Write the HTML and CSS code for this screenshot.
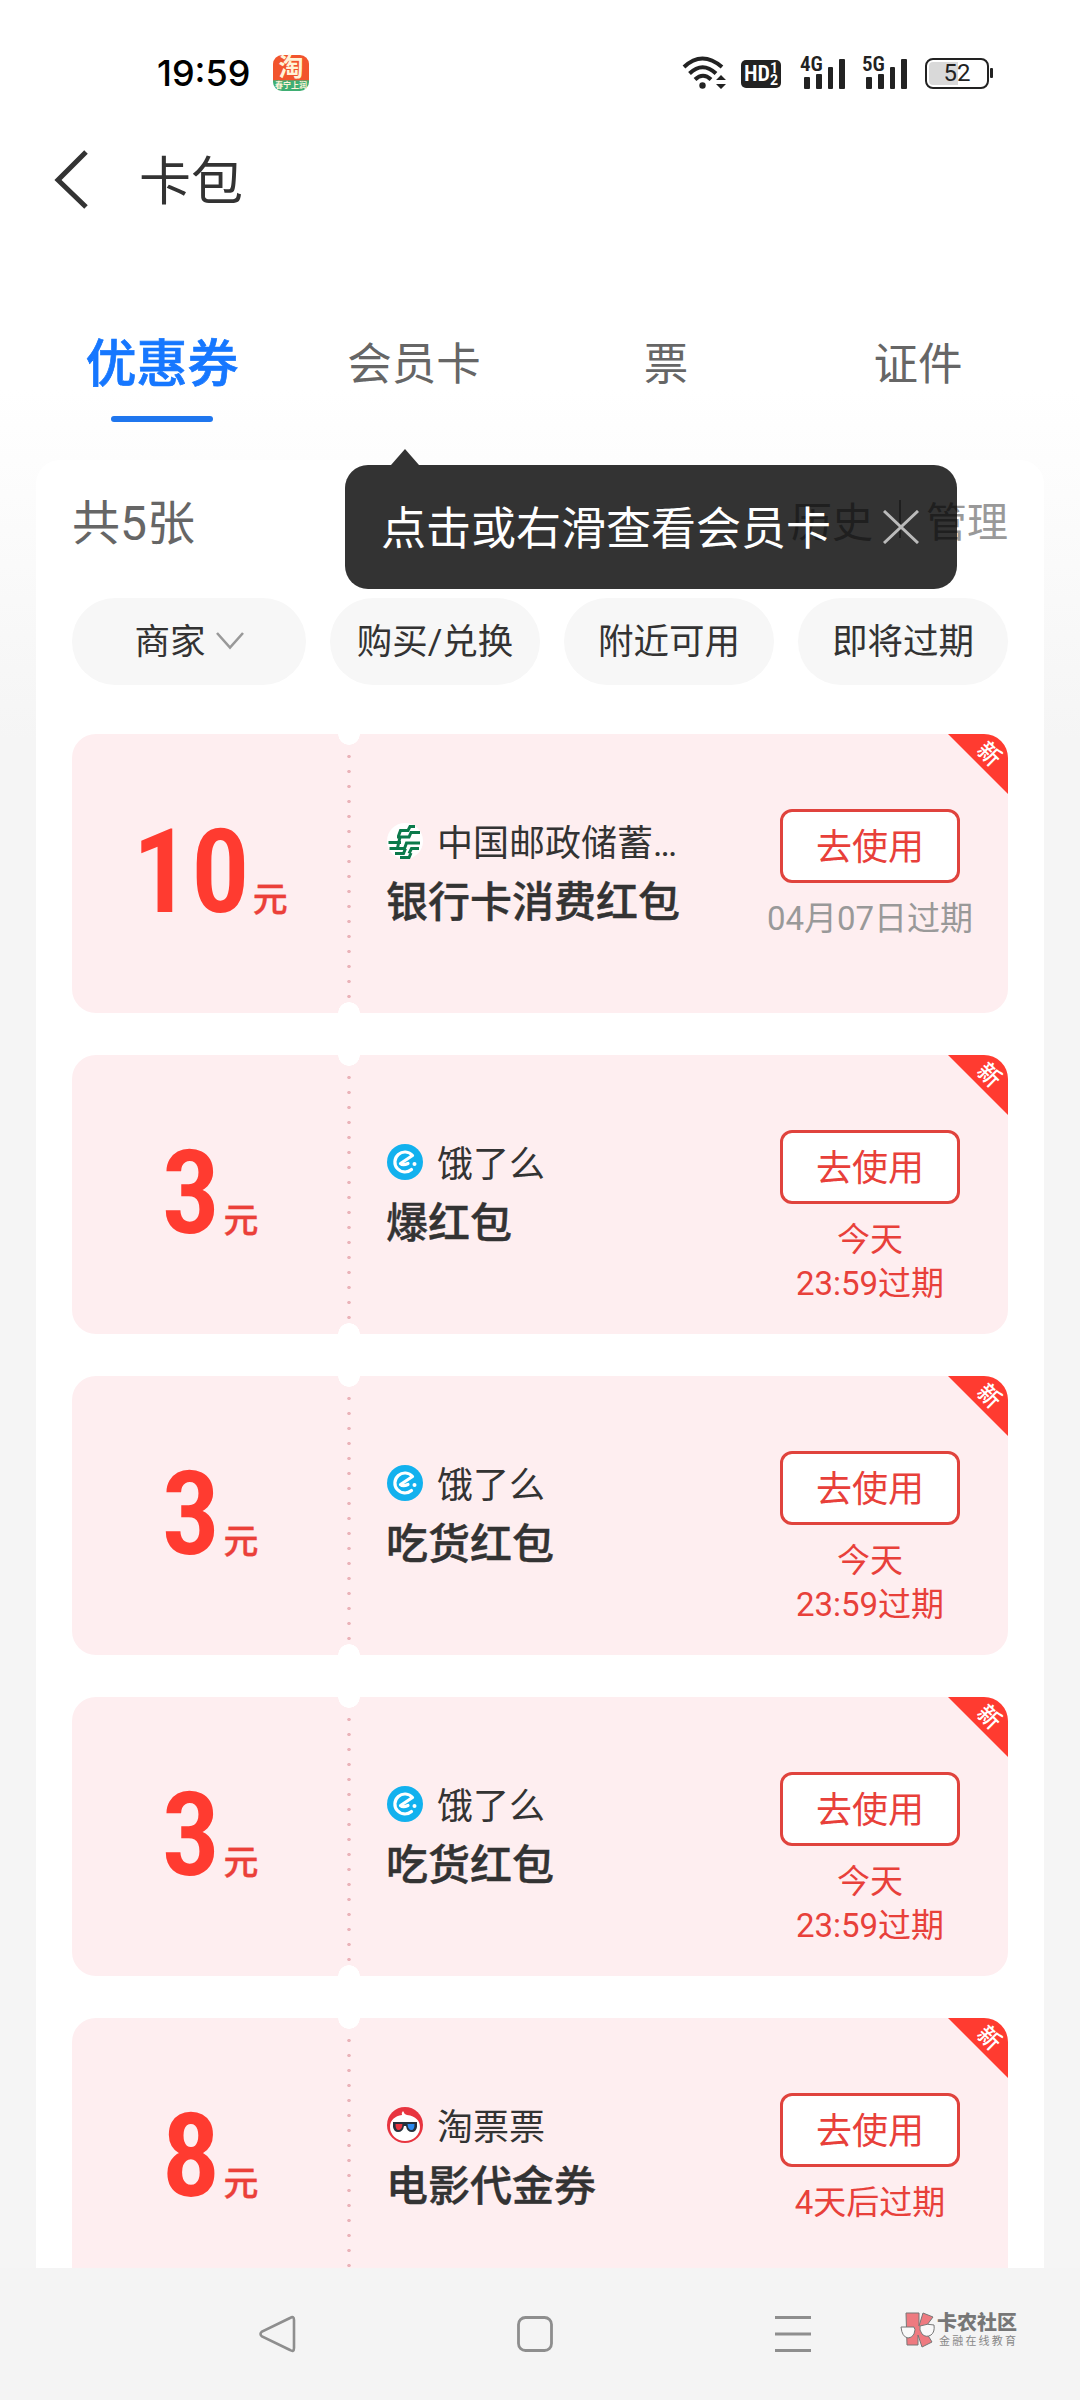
FILE: index.html
```html
<!DOCTYPE html>
<html lang="zh-CN">
<head>
<meta charset="utf-8">
<title>卡包</title>
<link rel="stylesheet" href="styles.css">
</head>
<body>
<svg class="defs" aria-hidden="true">
  <symbol id="psbc" viewBox="0 0 36 36">
    <circle cx="18" cy="18" r="18" fill="#fff"/>
    <g fill="none" stroke="#0b7a4b" stroke-width="3">
      <path d="M11.500 13L13.500 7.500H21L23 3.500H28M10 14H22L24 9.500H33"/>
      <path d="M1.500 19.500H14M2.500 25.500H17.500L19.500 20H33M13 14L10.500 25M22 30.500L24.500 25.500H32M8 30.500H16.500L18.500 25.500M13 34.500H22L24 30"/>
    </g>
  </symbol>
  <symbol id="eleme" viewBox="0 0 36 36">
    <circle cx="18" cy="18" r="18" fill="#12b1ee"/>
    <path d="M24.500 25.500A10 10 0 1 1 25.500 11.500L13.500 19.500Q16 22 21 19.500" fill="none" stroke="#fff" stroke-width="3.200" stroke-linecap="round" stroke-linejoin="round"/>
    <circle cx="27.500" cy="20" r="2" fill="#fff"/>
  </symbol>
  <symbol id="taopiaopiao" viewBox="0 0 36 36">
    <circle cx="18" cy="18" r="18" fill="#e8343f"/>
    <path d="M16 4Q17 7 20 8C29 9 33 14 33 20A15 14 0 0 1 3 20C3 13 8 9 15 8Q14 6 16 4Z" fill="#fff"/>
    <path d="M6 15H30V20Q29 25 25 25Q20 25 19 19H17Q16 25 11 25Q7 25 6 20Z" fill="#26313c"/>
    <path d="M8.500 17H15.500Q15 23 11.500 23Q8.500 23 8.500 17Z" fill="#e8343f"/>
    <path d="M20.500 17H27.500Q27.500 23 24.500 23Q21 23 20.500 17Z" fill="#2b8af0"/>
  </symbol>
</svg>

<div class="screen">
  <header class="status">
    <span class="clock">19:59</span>
    <span class="app-icon"><b>淘</b><i>春宁上润</i></span>
    <div class="indicators">
      <svg class="wifi" width="42" height="34" viewBox="0 0 42 34">
        <g fill="none" stroke="#222" stroke-width="4">
          <path d="M2 11Q20 -6 40 11"/><path d="M7.500 17.500Q20.500 5 34 17.500"/><path d="M13 23.500Q21 16 29 23.500"/>
        </g>
        <circle cx="20.500" cy="29.500" r="3.200" fill="#222"/>
        <path d="M34 24L39 19L44 24ZM34 28L39 33L44 28Z" fill="#222"/>
      </svg>
      <span class="hd"><b>HD</b><span><i>1</i><i>2</i></span></span>
      <span class="signal"><em>4G</em><i class="b1"></i><i class="b2"></i><i class="b3"></i><i class="b4"></i></span>
      <span class="signal"><em>5G</em><i class="b1"></i><i class="b2"></i><i class="b3"></i><i class="b4"></i></span>
      <span class="battery">52</span>
    </div>
  </header>

  <div class="titlebar">
    <svg class="back" width="36" height="60" viewBox="0 0 36 60"><path d="M33 2L5 30L33 57" fill="none" stroke="#333" stroke-width="5"/></svg>
    <h1>卡包</h1>
  </div>

  <nav class="tabs">
    <a class="active">优惠券</a>
    <a>会员卡</a>
    <a>票</a>
    <a>证件</a>
  </nav>

  <main class="panel">
    <div class="summary">
      <span class="count">共5张</span>
      <span class="links"><span>历史</span><i></i><span>管理</span></span>
    </div>
    <div class="filters">
      <span class="chip">商家<svg width="28" height="18" viewBox="0 0 28 18"><path d="M1 1L14 15.500L27 1" fill="none" stroke="#999" stroke-width="2.600"/></svg></span>
      <span class="chip">购买/兑换</span>
      <span class="chip">附近可用</span>
      <span class="chip">即将过期</span>
    </div>

    <section class="list">
      <article class="coupon">
        <div class="amount"><b>10</b><span>元</span></div>
        <div class="info">
          <p class="shop"><svg width="36" height="36"><use href="#psbc"/></svg><span>中国邮政储蓄<span class="dots">...</span></span></p>
          <h2>银行卡消费红包</h2>
        </div>
        <div class="action"><a class="btn">去使用</a><p class="expire later">04月07日过期</p></div>
        <span class="ribbon"><b>新</b></span>
      </article>
      <article class="coupon">
        <div class="amount"><b>3</b><span>元</span></div>
        <div class="info">
          <p class="shop"><svg width="36" height="36"><use href="#eleme"/></svg><span>饿了么</span></p>
          <h2>爆红包</h2>
        </div>
        <div class="action"><a class="btn">去使用</a><p class="expire">今天<br>23:59过期</p></div>
        <span class="ribbon"><b>新</b></span>
      </article>
      <article class="coupon">
        <div class="amount"><b>3</b><span>元</span></div>
        <div class="info">
          <p class="shop"><svg width="36" height="36"><use href="#eleme"/></svg><span>饿了么</span></p>
          <h2>吃货红包</h2>
        </div>
        <div class="action"><a class="btn">去使用</a><p class="expire">今天<br>23:59过期</p></div>
        <span class="ribbon"><b>新</b></span>
      </article>
      <article class="coupon">
        <div class="amount"><b>3</b><span>元</span></div>
        <div class="info">
          <p class="shop"><svg width="36" height="36"><use href="#eleme"/></svg><span>饿了么</span></p>
          <h2>吃货红包</h2>
        </div>
        <div class="action"><a class="btn">去使用</a><p class="expire">今天<br>23:59过期</p></div>
        <span class="ribbon"><b>新</b></span>
      </article>
      <article class="coupon">
        <div class="amount"><b>8</b><span>元</span></div>
        <div class="info">
          <p class="shop"><svg width="36" height="36"><use href="#taopiaopiao"/></svg><span>淘票票</span></p>
          <h2>电影代金券</h2>
        </div>
        <div class="action"><a class="btn">去使用</a><p class="expire">4天后过期</p></div>
        <span class="ribbon"><b>新</b></span>
      </article>
    </section>

    <div class="tooltip">
      <span>点击或右滑查看会员卡</span>
      <svg width="36" height="34" viewBox="0 0 36 34"><path d="M1 1L35 33M35 1L1 33" stroke="#bbb" stroke-width="3"/></svg>
    </div>
  </main>

  <footer class="navbar">
    <svg width="38" height="38" viewBox="0 0 38 38"><path d="M32 3Q36 0.500 36 5V33Q36 37.500 32 35L4 21.500Q1 19 4 16.500Z" fill="none" stroke="#8e8e8e" stroke-width="2.600"/></svg>
    <svg width="38" height="38" viewBox="0 0 38 38"><rect x="2.500" y="2.500" width="33" height="33" rx="7" fill="none" stroke="#8e8e8e" stroke-width="2.800"/></svg>
    <svg width="38" height="38" viewBox="0 0 38 38"><path d="M1 2.500H37M1 19H37M1 35.500H37" stroke="#8e8e8e" stroke-width="3"/></svg>
    <div class="watermark">
      <svg width="36" height="36" viewBox="0 0 36 36">
        <g fill="#ee7a80" stroke="#777" stroke-width="1">
          <path d="M6 1H19V14L23 1L33 5L24 17L32 30L22 35L18 23V33H7Z"/>
        </g>
        <path d="M1 15H14Q16 17 14 22Q12 26 8 26Q2 25 1 15ZM20 14Q28 11 34 13Q35 20 31 23Q26 26 22 22Q19 18 20 14Z" fill="#f9f9f9" stroke="#777" stroke-width="1"/>
      </svg>
      <div><strong>卡农社区</strong><small>金融在线教育</small></div>
    </div>
  </footer>
</div>
</body>
</html>
```
FILE: styles.css
```css
* { box-sizing: border-box; margin: 0; padding: 0; }

body {
  width: 1080px;
  height: 2400px;
  overflow: hidden;
  font-family: Roboto, "Noto Sans CJK SC", sans-serif;
  color: #333;
}

i, em { font-style: normal; }
.defs { position: absolute; width: 0; height: 0; }

.screen {
  height: 2400px;
  display: flex;
  flex-direction: column;
  background: linear-gradient(#fff 390px, #f5f5f5 740px);
}

/* status bar */
.status {
  height: 120px;
  padding: 26px 87px 0 157px;
  display: flex;
  align-items: center;
}
.clock { font: 450 36px/36px Inter, sans-serif; color: #000; width: 116px; }
.app-icon {
  width: 36px;
  height: 36px;
  border-radius: 9px;
  display: flex;
  flex-direction: column;
  align-items: center;
  background: linear-gradient(#f2542d 68%, #3fae73 72%);
  color: #fff3d8;
}
.app-icon b { font-size: 25px; line-height: 26px; }
.app-icon i { font-size: 8px; line-height: 9px; font-weight: 700; white-space: nowrap; }
.indicators { margin-left: auto; display: flex; align-items: center; color: #222; }
.wifi { overflow: visible; margin-right: 17px; }
.hd {
  width: 40px;
  height: 28px;
  margin: 2px 20px 0 0;
  border-radius: 5px;
  background: #222;
  color: #fff;
  display: flex;
  align-items: center;
  justify-content: center;
}
.hd b { font: 600 22px/28px Roboto, sans-serif; font-stretch: 76%; }
.hd span { display: flex; flex-direction: column; }
.hd i { font: 700 14px/12px Roboto, sans-serif; }
.signal {
  position: relative;
  width: 44px;
  height: 32px;
  margin-right: 18px;
  padding-left: 3px;
  display: flex;
  align-items: flex-end;
  gap: 6px;
}
.signal em {
  position: absolute;
  left: -1px;
  top: -2px;
  font: 600 21px/18px Roboto, sans-serif;
  font-stretch: 80%;
}
.signal i { width: 6px; border-radius: 1px; background: #222; }
.b1 { height: 12px; }
.b2 { height: 15px; }
.b3 { height: 22px; }
.b4 { height: 30px; }
.battery {
  position: relative;
  width: 64px;
  height: 31px;
  margin-right: 4px;
  border: 2.500px solid #222;
  border-radius: 8px;
  background: linear-gradient(90deg, #d9d9d9 52%, #fff 52%) content-box;
  padding: 2px;
  font: 400 24px/23px Roboto, sans-serif;
  text-align: center;
}
.battery::after {
  content: "";
  position: absolute;
  right: -6px;
  top: 8px;
  width: 3px;
  height: 10px;
  border-radius: 1px;
  background: #222;
}

/* title and tabs */
.titlebar { height: 120px; padding-left: 53px; display: flex; align-items: center; gap: 50px; }
.titlebar h1 { padding-top: 5px; font-size: 52px; font-weight: 400; line-height: 60px; }
.tabs {
  height: 220px;
  padding: 90px 36px 0;
  display: grid;
  grid-template-columns: repeat(4, 1fr);
  text-align: center;
  font-size: 44.500px;
  line-height: 70px;
  color: #666;
}
.tabs .active { font-size: 51px; font-weight: 500; color: #1677ff; -webkit-text-stroke: 0.7px #1677ff; }
.tabs .active::after {
  content: "";
  display: block;
  width: 102px;
  height: 6px;
  margin: 16px auto 0;
  border-radius: 3px;
  background: #1f76ee;
}

/* panel */
.panel {
  position: relative;
  height: 1808px;
  margin: 0 36px;
  padding: 0 36px;
  background: #fff;
  border-radius: 24px 24px 0 0;
}
.summary {
  height: 138px;
  padding-bottom: 20px;
  display: flex;
  align-items: center;
  justify-content: space-between;
  color: #666;
}
.count { font-size: 48px; }
.links { display: flex; align-items: center; font-size: 41px; color: #999; }
.links i { width: 2px; height: 38px; margin: 0 25px 0 26px; background: #999; }
.filters { display: grid; grid-template-columns: 234px repeat(3, 210px); gap: 24px; }
.chip {
  height: 87px;
  padding-bottom: 6px;
  border-radius: 44px;
  background: #f7f7f7;
  display: flex;
  align-items: center;
  justify-content: center;
  gap: 10px;
  font-size: 35.500px;
}
.chip svg { margin-top: 5px; }

.list { height: 1534px; margin-top: 49px; overflow: hidden; }
.coupon {
  position: relative;
  height: 279px;
  margin-bottom: 42px;
  border-radius: 24px;
  overflow: hidden;
  display: grid;
  grid-template-columns: 276px 1fr 276px;
  background: #feeef0;
}
.coupon::before {
  content: "";
  position: absolute;
  inset: 0 auto 0 265.500px;
  width: 22px;
  background:
    radial-gradient(circle at 11px 0, #fff 10.500px, transparent 11px),
    radial-gradient(circle at 11px 100%, #fff 10.500px, transparent 11px);
}
.coupon::after {
  content: "";
  position: absolute;
  left: 275px;
  top: 15px;
  width: 4px;
  height: 255px;
  background: radial-gradient(circle at 2px 7.500px, #eab3b9 1.400px, transparent 2px) 0 0 / 4px 15px;
}
.amount {
  padding: 88px 0 0 0;
  display: flex;
  justify-content: center;
  align-items: baseline;
  gap: 3px;
  color: #ff3b30;
  line-height: 100px;
}
.amount b { font-size: 117px; font-weight: 600; font-stretch: 87.5%; }
.amount span { font-size: 35px; font-weight: 500; color: #eb4039; -webkit-text-stroke: 0.3px #eb4039; }
.info { padding: 83px 0 0 39px; white-space: nowrap; }
.shop { display: flex; align-items: center; height: 48px; font-size: 36px; line-height: 48px; }
.shop svg { margin-right: 14px; }
.shop > span { padding-top: 5px; }
.dots { letter-spacing: -2px; }
.info h2 { font-size: 42px; font-weight: 500; line-height: 60px; margin: 8px 0 0 -1px; -webkit-text-stroke: 0.4px #333; }
.action { padding-top: 75px; display: flex; flex-direction: column; align-items: center; color: #e8403a; }
.btn {
  width: 180px;
  height: 74px;
  border: 3px solid #e0433d;
  border-radius: 12px;
  background: #fff;
  font-size: 36px;
  line-height: 73px;
  text-align: center;
}
.expire { margin-top: 14px; font-size: 33px; line-height: 44px; text-align: center; }
.later { color: #999; }
.ribbon {
  position: absolute;
  top: 0;
  right: 0;
  width: 60px;
  height: 60px;
  background: #ff3b30;
  clip-path: polygon(0 0, 100% 0, 100% 100%);
  color: #fff;
}
.ribbon b {
  position: absolute;
  left: 29px;
  top: 9px;
  width: 24px;
  font-size: 23px;
  line-height: 24px;
  font-weight: 500;
  transform: rotate(45deg);
}

.tooltip {
  position: absolute;
  left: 309px;
  top: 5px;
  width: 612px;
  height: 124px;
  padding: 0 38px 0 36px;
  border-radius: 23px;
  background: rgba(0, 0, 0, 0.8);
  color: #fff;
  font-size: 45px;
  display: flex;
  align-items: center;
  justify-content: space-between;
}
.tooltip span { padding-bottom: 3px; }
.tooltip::before {
  content: "";
  position: absolute;
  left: 46px;
  top: -16px;
  border: 14px solid transparent;
  border-top: 0;
  border-bottom: 16px solid rgba(0, 0, 0, 0.8);
}

/* system navigation */
.navbar {
  position: relative;
  height: 132px;
  padding: 0 268px 0 258px;
  display: flex;
  align-items: center;
  justify-content: space-between;
  background: #f4f4f4;
}
.watermark {
  position: absolute;
  left: 900px;
  top: 44px;
  display: flex;
  gap: 1px;
  color: #777;
}
.watermark strong { display: block; font-size: 20px; line-height: 22px; font-weight: 900; }
.watermark small { display: block; margin-left: 2px; font-size: 11px; line-height: 16px; letter-spacing: 2.200px; color: #888; white-space: nowrap; }
```
